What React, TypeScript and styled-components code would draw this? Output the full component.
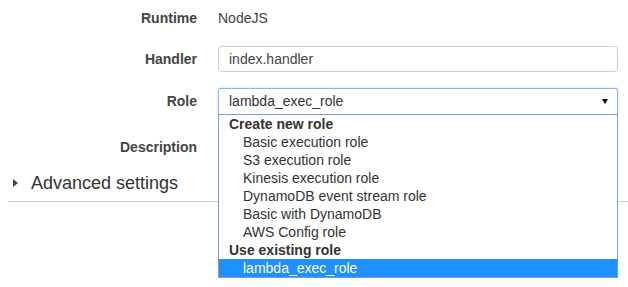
import React from 'react';
import styled, { createGlobalStyle } from 'styled-components';

const GlobalStyle = createGlobalStyle`
  html, body, #root {
    margin: 0;
    padding: 0;
    height: 100%;
    background: #fff;
  }
  body {
    font-family: "Liberation Sans", Arial, sans-serif;
    font-size: 14px;
    color: #444;
  }
`;

const Page = styled.div`
  box-sizing: border-box;
  min-height: 100%;
  padding: 5px 0 0 8px;
`;

const Row = styled.div<{ $top?: number }>`
  display: flex;
  align-items: center;
  height: 26px;
  margin-top: ${({ $top }) => $top ?? 0}px;
`;

const Label = styled.div`
  width: 189px;
  text-align: right;
  font-weight: bold;
  color: #444;
  flex-shrink: 0;
`;

const Field = styled.div`
  position: relative;
  margin-left: 21px;
  width: 400px;
  height: 100%;
  display: flex;
  align-items: center;
`;

const Value = styled.span`
  color: #444;
`;

const Input = styled.div`
  box-sizing: border-box;
  width: 100%;
  height: 26px;
  border: 1px solid #ccc;
  border-radius: 4px;
  padding: 0 10px;
  display: flex;
  align-items: center;
  color: #444;
`;

const Select = styled.div`
  box-sizing: border-box;
  width: 100%;
  height: 27px;
  border: 1px solid #8fb4ec;
  border-bottom-color: #7a9bd8;
  border-radius: 3px 3px 0 0;
  box-shadow: 0 0 2px rgba(102, 175, 233, 0.6);
  padding: 0 10px;
  display: flex;
  align-items: center;
  justify-content: space-between;
  color: #333;
`;

const Caret = styled.span`
  width: 0;
  height: 0;
  border-left: 3px solid transparent;
  border-right: 3px solid transparent;
  border-top: 5px solid #000;
  margin-right: -1px;
`;

const Menu = styled.ul`
  position: absolute;
  top: 27px;
  left: 0;
  right: 0;
  z-index: 2;
  margin: 0;
  padding: 0;
  list-style: none;
  background: #fff;
  border: 1px solid #7a9bd8;
  border-top: none;
  box-sizing: border-box;
`;

const Option = styled.li<{ $group?: boolean; $selected?: boolean }>`
  height: 18px;
  line-height: 18px;
  padding-left: ${({ $group }) => ($group ? 10 : 24)}px;
  font-weight: ${({ $group }) => ($group ? 'bold' : 'normal')};
  background: ${({ $selected }) => ($selected ? '#1e90ff' : 'transparent')};
  color: ${({ $selected }) => ($selected ? '#fff' : '#333')};
`;

const Section = styled.div`
  margin-top: 12px;
  padding: 0 0 7px 5px;
  border-bottom: 1px solid #ccc;
  display: flex;
  align-items: center;
  height: 22px;
`;

const Arrow = styled.span`
  width: 0;
  height: 0;
  border-top: 4px solid transparent;
  border-bottom: 4px solid transparent;
  border-left: 5px solid #444;
  margin-right: 13px;
`;

const SectionTitle = styled.span`
  font-size: 18px;
  color: #333;
`;

const options: { text: string; group?: boolean; selected?: boolean }[] = [
  { text: 'Create new role', group: true },
  { text: 'Basic execution role' },
  { text: 'S3 execution role' },
  { text: 'Kinesis execution role' },
  { text: 'DynamoDB event stream role' },
  { text: 'Basic with DynamoDB' },
  { text: 'AWS Config role' },
  { text: 'Use existing role', group: true },
  { text: 'lambda_exec_role', selected: true },
];

function App() {
  return (
    <Page>
      <GlobalStyle />
      <Row>
        <Label>Runtime</Label>
        <Field>
          <Value>NodeJS</Value>
        </Field>
      </Row>
      <Row $top={15}>
        <Label>Handler</Label>
        <Field>
          <Input>index.handler</Input>
        </Field>
      </Row>
      <Row $top={16}>
        <Label>Role</Label>
        <Field>
          <Select>
            lambda_exec_role
            <Caret />
          </Select>
          <Menu>
            {options.map((o) => (
              <Option key={o.text} $group={o.group} $selected={o.selected}>
                {o.text}
              </Option>
            ))}
          </Menu>
        </Field>
      </Row>
      <Row $top={20}>
        <Label>Description</Label>
      </Row>
      <Section>
        <Arrow />
        <SectionTitle>Advanced settings</SectionTitle>
      </Section>
    </Page>
  );
}

export default App;
